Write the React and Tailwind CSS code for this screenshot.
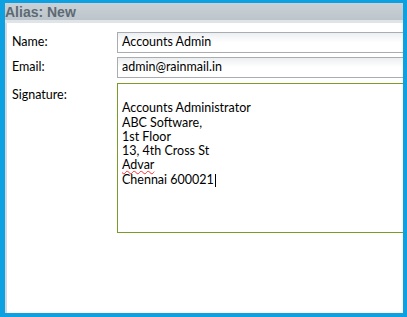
export default function App() {
  const font = { fontFamily: 'Lato, "Noto Sans", sans-serif' };
  return (
    <div className="w-[407px] h-[317px] bg-[#0ea1e2] pt-[3px] pl-[5px] pr-[4px] pb-[4px] flex flex-col overflow-hidden">
      <div className="h-[17px] shrink-0 bg-gradient-to-b from-[#c9d1d6] to-[#bcc5cb] flex items-center pl-0">
        <span className="text-[14px] font-bold text-[#5d6a74] leading-none" style={{ fontFamily: '"Liberation Sans", Arial, sans-serif' }}>Alias: New</span>
      </div>
      <div className="h-[3px] shrink-0 bg-[#dfe4e7]" />
      <div className="flex-1 flex bg-white overflow-hidden">
        <div className="w-[2px] bg-[#d4dadd] shrink-0" />
        <div className="flex-1 overflow-hidden pt-[9px] text-[12.5px] text-black" style={font}>
          <div className="flex items-center h-[21px]">
            <div className="w-[110px] pl-[5px] shrink-0">Name:</div>
            <div className="w-[300px] shrink-0 h-[21px] border border-[#a9adb1] bg-gradient-to-b from-[#eceff1] via-white to-white flex items-center pl-[4px]">Accounts Admin</div>
          </div>
          <div className="flex items-center h-[21px] mt-[4px]">
            <div className="w-[110px] pl-[5px] shrink-0">Email:</div>
            <div className="w-[300px] shrink-0 h-[21px] border border-[#a9adb1] bg-gradient-to-b from-[#eceff1] via-white to-white flex items-center pl-[4px]">admin@rainmail.in</div>
          </div>
          <div className="flex mt-[5px]">
            <div className="w-[110px] pl-[5px] pt-[3px] shrink-0">Signature:</div>
            <div className="w-[300px] shrink-0 h-[150px] border border-[#7a9a2a] bg-white pl-[4px] pt-[3px] leading-[14.3px]">
              <div>&nbsp;</div>
              <div>Accounts Administrator</div>
              <div>ABC Software,</div>
              <div>1st Floor</div>
              <div>13, 4th Cross St</div>
              <div className="underline decoration-wavy decoration-red-500 decoration-1">Advar</div>
              <div>Chennai 600021<span className="inline-block w-px h-[13px] bg-black align-middle ml-px" /></div>
            </div>
          </div>
        </div>
      </div>
    </div>
  );
}
